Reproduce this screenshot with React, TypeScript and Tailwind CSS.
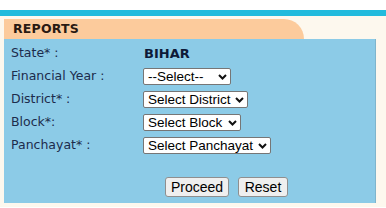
import React from "react";

const rows = [
  { label: "Financial Year :", value: "--Select--", width: "w-[88px]" },
  { label: "District* :", value: "Select District", width: "w-[105px]" },
  { label: "Block*:", value: "Select Block", width: "w-[98px]" },
  { label: "Panchayat* :", value: "Select Panchayat", width: "w-[128px]" },
];

const Chevron: React.FC = () => (
  <svg width="9" height="6" viewBox="0 0 9 6" className="shrink-0">
    <path d="M1 1 L4.5 4.5 L8 1" fill="none" stroke="#111" strokeWidth="2" />
  </svg>
);

const App: React.FC = () => {
  return (
    <div className="w-[386px] h-[208px] bg-white overflow-hidden pt-[10px]">
      <div className="h-[6px] bg-[#22bbdd]" />
      <div className="bg-[#fdf8ee] px-[4px] pt-[3px] pb-[4px]">
        <div className="h-[20px] w-[300px] rounded-tr-[22px] bg-[#fccb9c] flex items-center pl-[9px]">
          <span className="text-[12.5px] font-bold text-[#2a1a12] font-['DejaVu_Sans',sans-serif] tracking-[0.2px]">
            REPORTS
          </span>
        </div>
        <div className="w-[372px] h-[164px] bg-[#8ccbe7] border-r border-[#7fb5cc] pt-[3px] font-['DejaVu_Sans',sans-serif] text-[12.5px] text-[#1c2c4c]">
          <div className="flex items-center h-[23px] pl-[7px]">
            <span className="w-[133px]">State* :</span>
            <span className="font-bold text-[13px] text-[#0e1a38]">BIHAR</span>
          </div>
          {rows.map((r) => (
            <div key={r.label} className="flex items-center h-[23px] pl-[7px]">
              <span className="w-[132px]">{r.label}</span>
              <div
                className={`${r.width} h-[17px] bg-white border border-[#767676] rounded-[2px] flex items-center gap-[3px] pl-[4px] pr-[3px] font-['Liberation_Sans',sans-serif] text-[13.5px] text-black`}
              >
                <span className="leading-none flex-1 whitespace-nowrap">{r.value}</span>
                <Chevron />
              </div>
            </div>
          ))}
          <div className="flex gap-[9px] pl-[161px] mt-[20px] font-['Liberation_Sans',sans-serif] text-[14px] text-black">
            <button className="w-[64px] h-[20px] bg-[#efefef] border border-[#8f8f8f] rounded-[3px] leading-none">
              Proceed
            </button>
            <button className="w-[50px] h-[20px] bg-[#efefef] border border-[#8f8f8f] rounded-[3px] leading-none">
              Reset
            </button>
          </div>
        </div>
      </div>
    </div>
  );
};

export default App;
